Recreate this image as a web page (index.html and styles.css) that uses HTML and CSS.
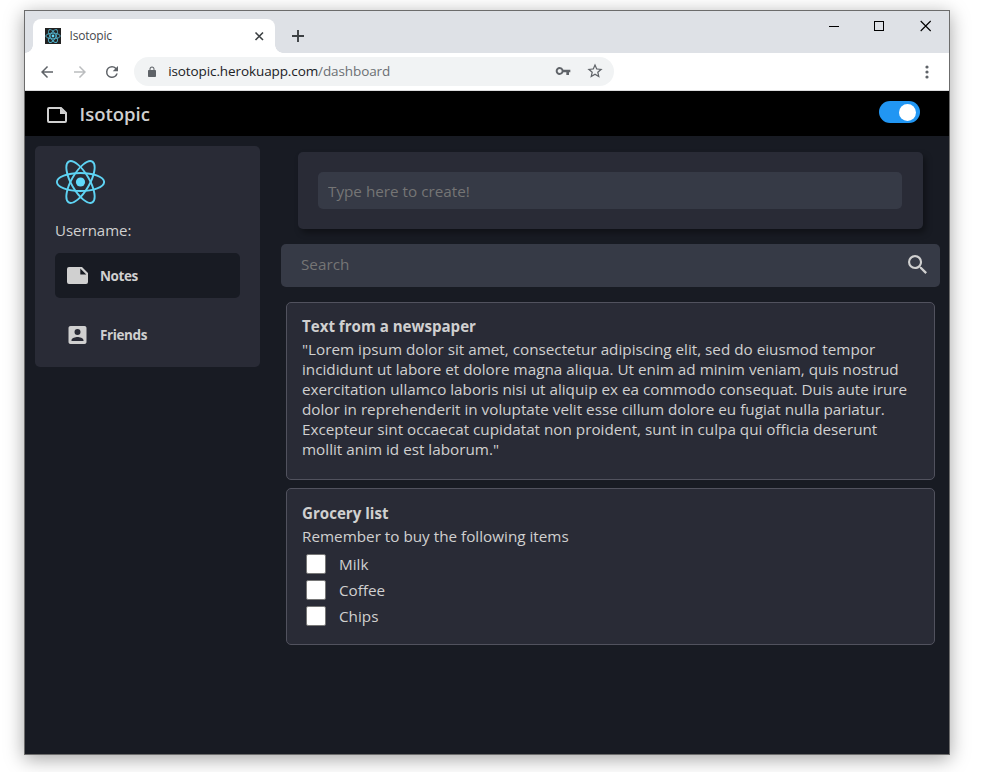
FILE: index.html
```html
<!DOCTYPE html>
<html lang="en">
<head>
<meta charset="utf-8">
<title>Isotopic</title>
<link rel="stylesheet" href="styles.css">
</head>
<body>
<div class="window">
  <div class="tabstrip">
    <div class="tab">
      <svg class="favicon" viewBox="0 0 16 16"><rect width="16" height="16" fill="#222"/><g fill="none" stroke="#52b5cf" stroke-width=".9"><ellipse cx="8" cy="8" rx="7.2" ry="2.8"/><ellipse cx="8" cy="8" rx="7.2" ry="2.8" transform="rotate(60 8 8)"/><ellipse cx="8" cy="8" rx="7.2" ry="2.8" transform="rotate(120 8 8)"/></g><circle cx="8" cy="8" r="1.4" fill="#61dafb"/></svg>
      <span class="tab-title">Isotopic</span>
      <svg class="tab-close" viewBox="0 0 10 10"><path d="M1.5 1.5l7.5 7.5M9 1.5L1.5 9" stroke="#3c4043" stroke-width="1.6"/></svg>
    </div>
    <svg class="new-tab" viewBox="0 0 12 12"><path d="M6 0v12M0 6h12" stroke="#3c4043" stroke-width="1.9"/></svg>
    <div class="controls">
      <svg viewBox="0 0 12 12"><path d="M1 6.5h10" stroke="#000"/></svg>
      <svg viewBox="0 0 12 12"><rect x="1.5" y="1.5" width="9" height="9" fill="none" stroke="#000"/></svg>
      <svg viewBox="0 0 12 12"><path d="M.7 1l10 10M10.7 1L.7 11" stroke="#000" stroke-width="1.1"/></svg>
    </div>
  </div>
  <div class="toolbar">
    <svg class="nav" viewBox="0 0 24 24" fill="#5f6368"><path d="M20 11H7.83l5.59-5.59L12 4l-8 8 8 8 1.41-1.41L7.83 13H20v-2z"/></svg>
    <svg class="nav" viewBox="0 0 24 24" fill="#bbbdbf"><path d="M12 4l-1.41 1.41L16.17 11H4v2h12.17l-5.58 5.59L12 20l8-8z"/></svg>
    <svg class="nav" viewBox="0 0 24 24" fill="#5f6368"><path d="M17.65 6.35A7.96 7.96 0 0 0 12 4a8 8 0 1 0 7.73 10h-2.08A6 6 0 1 1 12 6c1.66 0 3.14.69 4.22 1.78L13 11h7V4l-2.35 2.35z"/></svg>
    <div class="omnibox">
      <svg class="lock" viewBox="0 0 24 24" fill="#5f6368"><path d="M18 8h-1V6c0-2.76-2.24-5-5-5S7 3.24 7 6v2H6c-1.1 0-2 .9-2 2v10c0 1.1.9 2 2 2h12c1.1 0 2-.9 2-2V10c0-1.1-.9-2-2-2zM9 8V6a3 3 0 0 1 6 0v2z"/></svg>
      <span class="url">isotopic.herokuapp.com<span class="path">/dashboard</span></span>
      <svg class="key" viewBox="0 0 24 24" fill="#5f6368"><path d="M12.65 10A5.99 5.99 0 0 0 7 6c-3.31 0-6 2.69-6 6s2.69 6 6 6a5.99 5.99 0 0 0 5.65-4H17v4h4v-4h2v-4H12.65zM7 15c-1.65 0-3-1.35-3-3s1.35-3 3-3 3 1.35 3 3-1.35 3-3 3z"/></svg>
      <svg class="star" viewBox="1.500 1.500 21 21" fill="#5f6368"><path d="M22 9.24l-7.19-.62L12 2 9.19 8.63 2 9.24l5.46 4.73L5.82 21 12 17.27 18.18 21l-1.63-7.03L22 9.24zM12 15.4l-3.76 2.27 1-4.28-3.32-2.88 4.38-.38L12 6.1l1.71 4.04 4.38.38-3.32 2.88 1 4.28L12 15.4z"/></svg>
    </div>
    <svg class="menu" viewBox="0 0 4 14" fill="#5f6368"><circle cx="2" cy="2" r="1.6"/><circle cx="2" cy="7" r="1.6"/><circle cx="2" cy="12" r="1.6"/></svg>
  </div>
  <header class="header">
    <svg class="brand-icon" viewBox="0 0 20 16"><path d="M2 1H14L19 6V14a1 1 0 0 1-1 1H2a1 1 0 0 1-1-1V2a1 1 0 0 1 1-1Z" fill="none" stroke="#d0d0d0" stroke-width="2"/><path d="M13 1V7H19Z" fill="#d0d0d0"/></svg>
    <h1 class="brand">Isotopic</h1>
    <div class="switch"></div>
  </header>
  <div class="content">
    <aside class="sidebar">
      <svg class="logo" viewBox="0 0 50 44"><g fill="none" stroke="#5ed3f3" stroke-width="1.9"><ellipse cx="25.5" cy="22" rx="23.6" ry="9"/><ellipse cx="25.5" cy="22" rx="23.6" ry="9" transform="rotate(60 25.5 22)"/><ellipse cx="25.5" cy="22" rx="23.6" ry="9" transform="rotate(120 25.5 22)"/></g><circle cx="25.5" cy="22" r="4.6" fill="#61dafb"/></svg>
      <div class="username">Username:</div>
      <nav>
        <a class="item active"><svg class="note" viewBox="0 0 21 17"><path fill-rule="evenodd" d="M2 0H15L21 6V15a2 2 0 0 1-2 2H2a2 2 0 0 1-2-2V2a2 2 0 0 1 2-2ZM13.3 1.6V7.5H19.3Z" fill="#d0d0d0"/></svg><span>Notes</span></a>
        <a class="item"><svg class="friend" viewBox="3 3 18 18"><path d="M3 5v14c0 1.1.89 2 2 2h14c1.1 0 2-.9 2-2V5c0-1.1-.9-2-2-2H5c-1.11 0-2 .9-2 2zm12 4a3 3 0 1 1-6 0 3 3 0 0 1 6 0zm-9 8c0-2 4-3.1 6-3.1s6 1.1 6 3.1v1H6v-1z" fill="#d0d0d0"/></svg><span>Friends</span></a>
      </nav>
    </aside>
    <main class="main">
      <div class="create"><input class="create-input" type="text" placeholder="Type here to create!"></div>
      <div class="search">
        <input class="search-input" type="text" placeholder="Search">
        <svg class="search-icon" viewBox="3 3 17.5 17.5"><path fill="#d0d0d0" d="M15.5 14h-.79l-.28-.27A6.47 6.47 0 0 0 16 9.5 6.5 6.5 0 1 0 9.5 16c1.61 0 3.09-.59 4.23-1.57l.27.28v.79l5 4.99L20.49 19l-4.99-5zm-6 0C7.01 14 5 11.99 5 9.5S7.01 5 9.5 5 14 7.01 14 9.5 11.99 14 9.5 14z"/></svg>
      </div>
      <article class="card card-text">
        <h2>Text from a newspaper</h2>
        <p>"Lorem ipsum dolor sit amet, consectetur adipiscing elit, sed do eiusmod tempor<br>incididunt ut labore et dolore magna aliqua. Ut enim ad minim veniam, quis nostrud<br>exercitation ullamco laboris nisi ut aliquip ex ea commodo consequat. Duis aute irure<br>dolor in reprehenderit in voluptate velit esse cillum dolore eu fugiat nulla pariatur.<br>Excepteur sint occaecat cupidatat non proident, sunt in culpa qui officia deserunt<br>mollit anim id est laborum."</p>
      </article>
      <article class="card card-list">
        <h2>Grocery list</h2>
        <p>Remember to buy the following items</p>
        <ul class="list">
          <li><span class="box"></span>Milk</li>
          <li><span class="box"></span>Coffee</li>
          <li><span class="box"></span>Chips</li>
        </ul>
      </article>
    </main>
  </div>
</div>
</body>
</html>
```
FILE: styles.css
```css
* { box-sizing: border-box; }
body {
  margin: 0;
  height: 772px;
  overflow: hidden;
  background: #fff;
  font: 16px/20px "Open Sans", "Segoe UI", sans-serif;
  padding: 10px 0 0 24px;
}
svg { display: block; flex: none; }
.window {
  width: 926px;
  height: 745px;
  border: 1px solid #6c6c6c;
  background: #181b23;
  box-shadow: 0 4px 18px rgba(0, 0, 0, .36);
  display: flex;
  flex-direction: column;
}

/* Browser frame */
.tabstrip { height: 42px; background: #dee1e6; display: flex; padding: 8px 0 0 8px; flex: none; }
.tab {
  position: relative;
  width: 242px;
  height: 34px;
  background: #fff;
  border-radius: 8px 8px 0 0;
  display: flex;
  align-items: center;
  padding: 0 11px 0 12px;
}
.tab::before, .tab::after { content: ""; position: absolute; bottom: 0; width: 8px; height: 8px; }
.tab::before { left: -8px; background: radial-gradient(circle at 0 0, transparent 7.5px, #fff 8px); }
.tab::after { right: -8px; background: radial-gradient(circle at 100% 0, transparent 7.5px, #fff 8px); }
.favicon { width: 16px; height: 16px; }
.tab-title { font-size: 12px; letter-spacing: -.2px; color: #45484c; margin-left: 8.5px; flex: 1; }
.tab-close { width: 10px; height: 10px; }
.new-tab { width: 12px; height: 12px; margin: 11px 0 0 17px; }
.controls { margin-left: auto; display: flex; gap: 33px; padding-right: 17px; }
.controls svg { width: 12px; height: 12px; margin-top: 1px; }
.controls svg:last-child { margin-left: 2px; }
.toolbar {
  height: 38px;
  background: #fff;
  border-bottom: 1px solid #dcdcdd;
  display: flex;
  align-items: center;
  padding: 0 20px 0 13px;
  flex: none;
}
.nav { width: 18px; height: 18px; margin-right: 14.5px; }
.omnibox {
  width: 480px;
  height: 29px;
  margin-left: -2px;
  border-radius: 15px;
  background: #f1f3f4;
  display: flex;
  align-items: center;
  padding: 0 10.5px 0 12px;
  flex: none;
}
.lock { width: 12px; height: 12px; }
.url { font-size: 13.5px; letter-spacing: -.1px; color: #202124; margin: -1px 0 0 10.7px; flex: 1; }
.path { color: #6b6f73; }
.key { width: 16px; height: 16px; margin: -1px 16px 0 0; }
.star { width: 16px; height: 16px; margin-top: -1px; }
.menu { width: 4px; height: 14px; margin-left: auto; }

/* App header */
.header { height: 45px; background: #000; display: flex; align-items: center; padding: 0 29px 0 22px; flex: none; }
.brand-icon { width: 20px; height: 16px; margin-top: 2px; }
.brand { margin: 1px 0 0 12.5px; font-size: 18.5px; font-weight: 600; color: #d0d0d0; letter-spacing: 0; }
.switch { width: 41px; height: 22px; border-radius: 11px; background: #2196f3; margin: 0 0 3px auto; padding: 3px 4px; }
.switch::after { content: ""; display: block; width: 17px; height: 17px; border-radius: 50%; background: #fff; margin-left: auto; }

/* Page */
.content { display: flex; align-items: flex-start; padding: 10px 9px 0 10px; color: #d0d0d0; }
.sidebar { width: 225px; height: 221px; border-radius: 5px; background: #292b36; padding: 14px 20px 0; flex: none; }
.logo { width: 50px; height: 44px; }
.username { margin-top: 16px; height: 20px; font-size: 15px; line-height: 20px; }
.item { display: flex; align-items: center; height: 45px; border-radius: 5px; padding-left: 12px; font-size: 13.5px; font-weight: 700; letter-spacing: -.4px; }
.item + .item { margin-top: 14px; }
.active { background: #181b23; margin-top: 13px; }
.note { width: 21px; height: 17px; margin-right: 12px; }
.friend { width: 19px; height: 18px; margin: 0 13px 0 1px; }
.main { flex: 1; margin-left: 21px; padding-top: 6px; }
.create { height: 77px; margin: 0 17px; padding: 20px 21px 20px 20px; border-radius: 5px; background: #292b36; box-shadow: 3px 4px 6px rgba(0, 0, 0, .35); }
input { border: 0; outline: 0; background: transparent; color: #d0d0d0; font: inherit; font-size: 15.25px; }
input::placeholder { color: #757575; opacity: 1; }
.create-input { display: block; width: 100%; height: 37px; padding: 1px 10px 0; border-radius: 5px; background: #363a46; }
.search { display: flex; align-items: center; height: 43px; margin-top: 15px; border-radius: 5px; background: #363a46; padding: 0 13px 0 20px; }
.search-input { flex: 1; padding: 0; height: 40px; margin-top: -3px; }
.search-icon { width: 19px; height: 19px; margin-top: -3px; }
.card { margin: 8px 5px 0; border: 1px solid #51525e; border-radius: 5px; background: #292b36; padding: 10px 15px 15px; }
.card-text { margin-top: 15px; padding-bottom: 20px; }
.card h2 { margin: 0; font-size: 15.1px; line-height: 26px; font-weight: 700; }
.card p { margin: 0; font-size: 15.25px; line-height: 20px; white-space: nowrap; }
.card-list { padding-top: 11px; }
.list { list-style: none; margin: 5px 0 0; padding: 0 0 0 4px; font-size: 15.25px; }
.list li { display: flex; align-items: center; height: 26px; }
.box { width: 20px; height: 20px; background: #fff; border: 1px solid #767676; border-radius: 2px; margin-right: 13px; }
```
